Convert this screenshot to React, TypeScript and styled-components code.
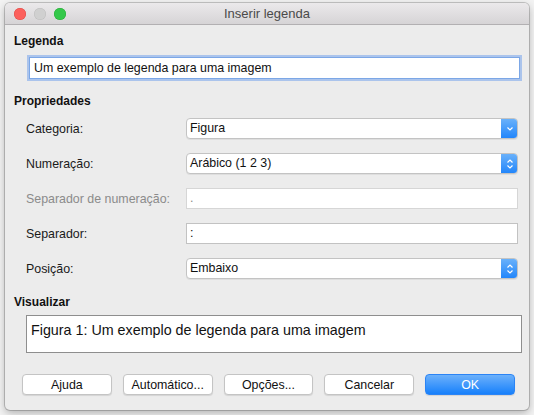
import React from 'react';
import styled, { createGlobalStyle } from 'styled-components';

const GlobalStyle = createGlobalStyle`
  html, body {
    margin: 0;
    padding: 0;
    background: #f3f3f3;
  }
  body {
    font-family: "Liberation Sans", Arial, sans-serif;
    font-size: 12.4px;
    color: #1a1a1a;
  }
`;

const Page = styled.div`
  width: 534px;
  height: 415px;
  padding: 3px 5px 0 5px;
  box-sizing: border-box;
`;

const Window = styled.div`
  width: 524px;
  height: 407px;
  background: #ececec;
  border-radius: 5px;
  overflow: hidden;
  box-shadow: 0 0 0 1px rgba(0, 0, 0, 0.18), 0 3px 8px rgba(0, 0, 0, 0.28);
  display: flex;
  flex-direction: column;
`;

const TitleBar = styled.div`
  height: 21px;
  flex: none;
  display: flex;
  align-items: center;
  position: relative;
  background: linear-gradient(#ebe9eb, #d6d4d6);
  border-bottom: 1px solid #b2b0b2;
`;

const Lights = styled.div`
  display: flex;
  gap: 8px;
  padding-left: 9px;
`;

const Light = styled.span<{ $color: string; $ring: string }>`
  width: 12px;
  height: 12px;
  border-radius: 50%;
  background: ${p => p.$color};
  box-shadow: inset 0 0 0 0.5px ${p => p.$ring};
`;

const Title = styled.div`
  position: absolute;
  left: 0;
  right: 0;
  text-align: center;
  color: #4a4a4a;
  font-size: 13px;
  pointer-events: none;
`;

const Body = styled.div`
  flex: 1;
  display: flex;
  flex-direction: column;
  padding: 8px 11px 15px 9px;
`;

const SectionTitle = styled.div<{ $top?: number }>`
  font-weight: bold;
  font-size: 12px;
  line-height: 16px;
  color: #111;
  margin-top: ${p => p.$top || 0}px;
`;

const CaptionField = styled.div`
  margin: 8px -2px 0 15px;
  height: 20px;
  line-height: 20px;
  background: #fff;
  border: 1px solid #7ca7e6;
  box-shadow: 0 0 0 2px rgba(118, 164, 236, 0.55);
  padding: 0 4px;
  color: #111;
`;

const FormGrid = styled.div`
  margin: 9px 0 0 12px;
  display: grid;
  grid-template-columns: 160px 1fr;
  row-gap: 14px;
  align-items: center;
`;

const Label = styled.div<{ $disabled?: boolean }>`
  color: ${p => (p.$disabled ? '#8b8b8b' : '#1a1a1a')};
`;

const Select = styled.div`
  height: 21px;
  box-sizing: border-box;
  display: flex;
  background: #fff;
  border: 1px solid #c3c3c3;
  border-radius: 4px;
  overflow: hidden;
  box-shadow: 0 1px 0 rgba(0, 0, 0, 0.06);
`;

const SelectValue = styled.div`
  flex: 1;
  padding-left: 3px;
  line-height: 19px;
  color: #111;
`;

const SelectButton = styled.div`
  width: 17px;
  margin: -1px -1px -1px 0;
  background: linear-gradient(#6db3fa, #1f84fb);
  display: flex;
  align-items: center;
  justify-content: center;
`;

const TextField = styled.div<{ $disabled?: boolean }>`
  height: 21px;
  box-sizing: border-box;
  background: #fff;
  border: 1px solid ${p => (p.$disabled ? '#d6d6d6' : '#c2c2c2')};
  padding-left: 3px;
  line-height: 19px;
  color: ${p => (p.$disabled ? '#8b8b8b' : '#111')};
`;

const Preview = styled.div`
  margin: 5px -4px 0 12px;
  height: 38px;
  box-sizing: border-box;
  background: #fff;
  border: 1px solid #8e8e8e;
  padding: 6px 0 0 4px;
  font-size: 14.3px;
  color: #111;
`;

const ButtonRow = styled.div`
  margin: 21px 3px 0 8px;
  display: grid;
  grid-template-columns: repeat(5, 1fr);
  gap: 11px;
`;

const Button = styled.button<{ $primary?: boolean }>`
  height: 21px;
  padding: 0;
  font-family: inherit;
  font-size: 12.4px;
  border-radius: 4px;
  border: 1px solid ${p => (p.$primary ? '#2b84f5' : '#c4c4c4')};
  background: ${p => (p.$primary ? 'linear-gradient(#6cb1fb, #1780fb)' : '#fff')};
  color: ${p => (p.$primary ? '#fff' : '#111')};
  box-shadow: 0 1px 1px rgba(0, 0, 0, 0.1);
`;

const Chevron = ({ double }: { double?: boolean }) =>
  double ? (
    <svg width="8" height="12" viewBox="0 0 8 12">
      <path d="M1.5 4.5 L4 2 L6.5 4.5 M1.5 7.5 L4 10 L6.5 7.5" fill="none" stroke="#fff" strokeWidth="1.2" />
    </svg>
  ) : (
    <svg width="8" height="6" viewBox="0 0 8 6">
      <path d="M1.5 1.5 L4 4 L6.5 1.5" fill="none" stroke="#fff" strokeWidth="1.2" />
    </svg>
  );

const Dropdown = ({ value, double }: { value: string; double?: boolean }) => (
  <Select>
    <SelectValue>{value}</SelectValue>
    <SelectButton>
      <Chevron double={double} />
    </SelectButton>
  </Select>
);

const buttons = ['Ajuda', 'Automático...', 'Opções...', 'Cancelar'];

export default function App() {
  return (
    <Page>
      <GlobalStyle />
      <Window>
        <TitleBar>
          <Lights>
            <Light $color="#fc605c" $ring="#de4a46" />
            <Light $color="#d0d0d0" $ring="#bdbdbd" />
            <Light $color="#34c84a" $ring="#27aa35" />
          </Lights>
          <Title>Inserir legenda</Title>
        </TitleBar>
        <Body>
          <SectionTitle>Legenda</SectionTitle>
          <CaptionField>Um exemplo de legenda para uma imagem</CaptionField>

          <SectionTitle $top={14}>Propriedades</SectionTitle>
          <FormGrid>
            <Label>Categoria:</Label>
            <Dropdown value="Figura" />
            <Label>Numeração:</Label>
            <Dropdown value="Arábico (1 2 3)" double />
            <Label $disabled>Separador de numeração:</Label>
            <TextField $disabled>.</TextField>
            <Label>Separador:</Label>
            <TextField>:</TextField>
            <Label>Posição:</Label>
            <Dropdown value="Embaixo" double />
          </FormGrid>

          <SectionTitle $top={15}>Visualizar</SectionTitle>
          <Preview>Figura 1: Um exemplo de legenda para uma imagem</Preview>

          <ButtonRow>
            {buttons.map(b => (
              <Button key={b}>{b}</Button>
            ))}
            <Button $primary>OK</Button>
          </ButtonRow>
        </Body>
      </Window>
    </Page>
  );
}
